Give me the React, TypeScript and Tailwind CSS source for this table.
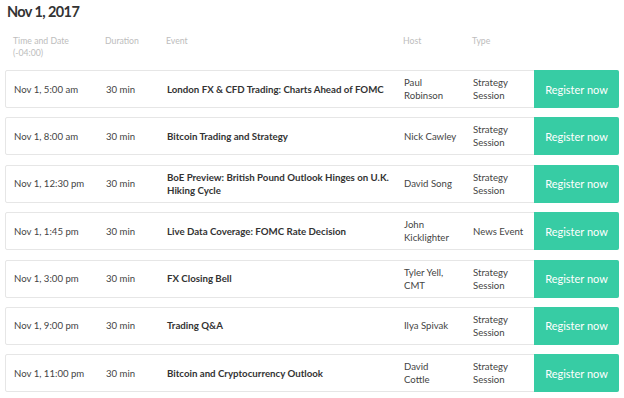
import React from 'react';

type Webinar = {
  time: string;
  title: string[];
  host: string[];
  type: string[];
};

const session = ['Strategy', 'Session'];

const webinars: Webinar[] = [
  { time: 'Nov 1, 5:00 am', title: ['London FX & CFD Trading: Charts Ahead of FOMC'], host: ['Paul', 'Robinson'], type: session },
  { time: 'Nov 1, 8:00 am', title: ['Bitcoin Trading and Strategy'], host: ['Nick Cawley'], type: session },
  { time: 'Nov 1, 12:30 pm', title: ['BoE Preview: British Pound Outlook Hinges on U.K.', 'Hiking Cycle'], host: ['David Song'], type: session },
  { time: 'Nov 1, 1:45 pm', title: ['Live Data Coverage: FOMC Rate Decision'], host: ['John', 'Kicklighter'], type: ['News Event'] },
  { time: 'Nov 1, 3:00 pm', title: ['FX Closing Bell'], host: ['Tyler Yell,', 'CMT'], type: session },
  { time: 'Nov 1, 9:00 pm', title: ['Trading Q&A'], host: ['Ilya Spivak'], type: session },
  { time: 'Nov 1, 11:00 pm', title: ['Bitcoin and Cryptocurrency Outlook'], host: ['David', 'Cottle'], type: session },
];

const cols = 'grid grid-cols-[92px_61px_237px_69px_61px_1fr] items-center';

const Lines: React.FC<{ lines: string[] }> = ({ lines }) => (
  <div className="whitespace-nowrap">
    {lines.map((l) => (
      <div key={l}>{l}</div>
    ))}
  </div>
);

const App: React.FC = () => {
  return (
    <div className="w-[624px] h-[398px] overflow-hidden bg-white px-[5px] font-['Lato','Liberation_Sans',sans-serif]">
      <h1 className="pl-[2px] pt-[2px] text-[14.5px] leading-[20px] font-bold tracking-[-0.6px] text-[#333]">Nov 1, 2017</h1>

      <div className={`${cols} mt-[13px] pl-[8px] text-[8.7px] leading-[12px] text-[#bdbdbd] items-start`}>
        <div>
          Time and Date
          <br />
          (-04:00)
        </div>
        <div>Duration</div>
        <div>Event</div>
        <div>Host</div>
        <div>Type</div>
        <div />
      </div>

      <div className="mt-[11px] flex flex-col gap-[9.4px]">
        {webinars.map((w) => (
          <div
            key={w.time}
            className={`${cols} h-[38px] pl-[8px] border border-[#e6e6e6] rounded-[2px] text-[9.6px] leading-[13px] text-[#444]`}
          >
            <div>{w.time}</div>
            <div>30 min</div>
            <div className="font-bold text-[#333] text-[9.7px]">
              <Lines lines={w.title} />
            </div>
            <Lines lines={w.host} />
            <Lines lines={w.type} />
            <button className="h-[38px] -my-px -mr-px bg-[#37cca4] text-white text-[11px] rounded-r-[2px]">
              Register now
            </button>
          </div>
        ))}
      </div>
    </div>
  );
};

export default App;
